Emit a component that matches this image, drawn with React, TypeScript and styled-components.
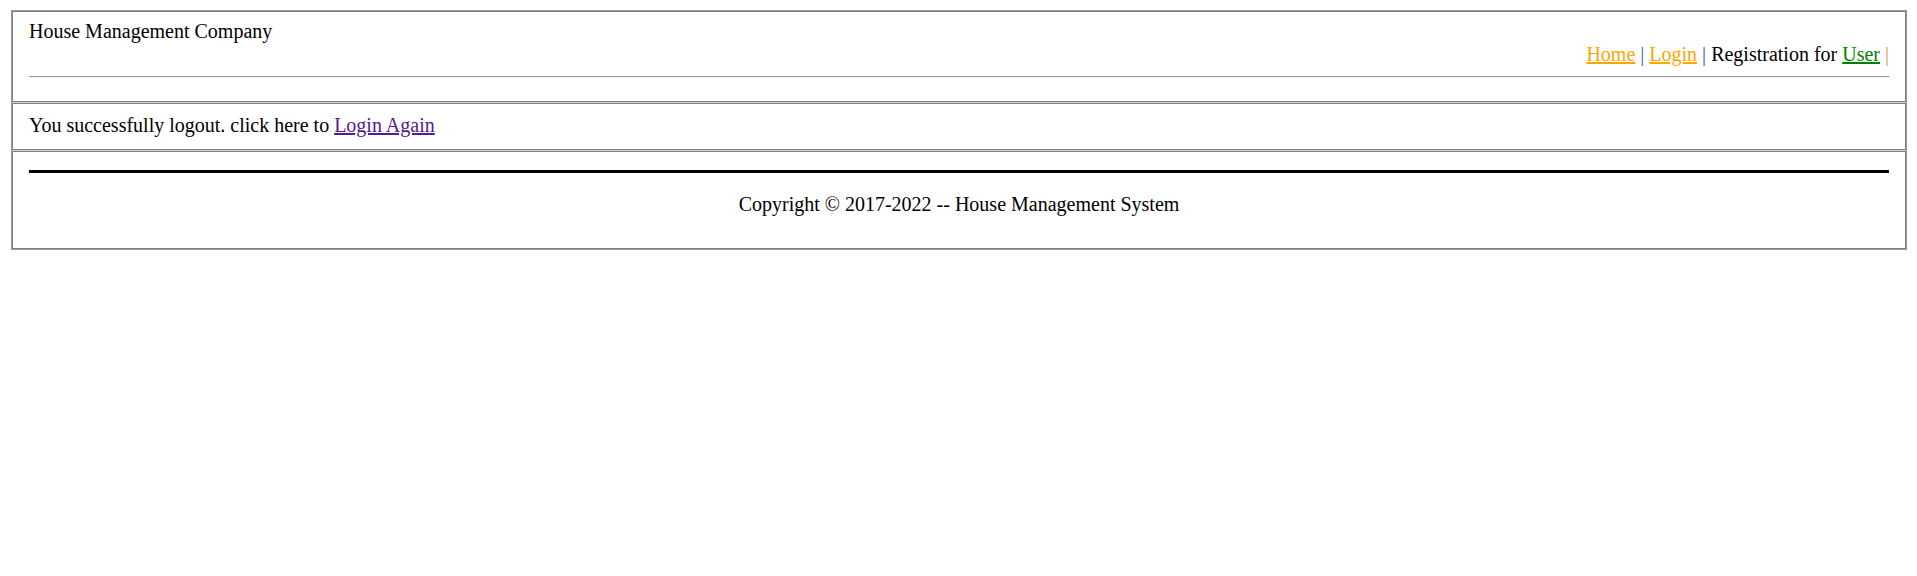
import React from 'react';
import styled, { createGlobalStyle } from 'styled-components';

const GlobalStyle = createGlobalStyle`
  html, body {
    margin: 0;
    padding: 0;
    background: #fff;
  }
  body {
    font-family: "Liberation Serif", "Times New Roman", serif;
    font-size: 20px;
    line-height: 23px;
    color: #000;
  }
`;

const Frame = styled.div`
  margin: 10px 10px 0 11px;
  border: 1px solid #9a9a9a;
  background: #cfcfcf;
  display: flex;
  flex-direction: column;
  gap: 1px;
`;

const Cell = styled.div<{ $top: number; $bottom: number }>`
  background: #fff;
  border: 1px solid #808080;
  padding: ${(p) => p.$top}px 16px ${(p) => p.$bottom}px 16px;
`;

const Title = styled.div`
  text-align: left;
`;

const Nav = styled.div`
  text-align: right;
`;

const NavLink = styled.a<{ $color: string }>`
  color: ${(p) => p.$color};
  text-decoration: underline;
  cursor: pointer;
`;

const Pipe = styled.span<{ $color?: string }>`
  color: ${(p) => p.$color || '#2f5f90'};
`;

const Rule = styled.hr<{ $heavy?: boolean }>`
  margin: 10px 0;
  height: 0;
  border: none;
  border-top: ${(p) => (p.$heavy ? '3px solid #000' : '1px solid #9a9a9a')};
  border-bottom: ${(p) => (p.$heavy ? 'none' : '1px solid #eeeeee')};
`;

const Message = styled.div``;

const AgainLink = styled.a`
  color: #551a8b;
  text-decoration: underline;
  cursor: pointer;
`;

const Copyright = styled.p`
  margin: 20px 0;
  text-align: center;
`;

export default function App() {
  return (
    <>
      <GlobalStyle />
      <Frame>
        <Cell $top={8} $bottom={13}>
          <Title>House Management Company</Title>
          <Nav>
            <NavLink $color="#ffa500">Home</NavLink> <Pipe>|</Pipe>{' '}
            <NavLink $color="#ffa500">Login</NavLink> <Pipe>|</Pipe> Registration for{' '}
            <NavLink $color="#008000">User</NavLink> <Pipe $color="#d49a5e">|</Pipe>
          </Nav>
          <Rule />
        </Cell>
        <Cell $top={10} $bottom={12}>
          <Message>
            You successfully logout. click here to <AgainLink>Login Again</AgainLink>
          </Message>
        </Cell>
        <Cell $top={8} $bottom={12}>
          <Rule $heavy />
          <Copyright>Copyright © 2017-2022 -- House Management System</Copyright>
        </Cell>
      </Frame>
    </>
  );
}
